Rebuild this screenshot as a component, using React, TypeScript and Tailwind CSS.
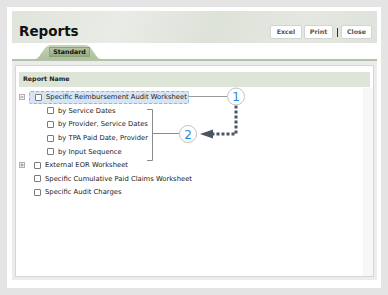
import React from "react";

const font = { fontFamily: '"DejaVu Sans", Verdana, sans-serif' };

function Box() {
  return <span className="inline-block w-[7px] h-[7px] border border-[#7a7a7a] bg-white rounded-[1px] shrink-0" />;
}

function Expander({ plus }: { plus?: boolean }) {
  return (
    <svg width="6" height="6" viewBox="0 0 6 6" className="shrink-0">
      <rect x="0.5" y="0.5" width="5" height="5" fill="#f4f4f4" stroke="#b0b0b0" strokeWidth="1" />
      <line x1="1.5" y1="3" x2="4.5" y2="3" stroke="#8a8a8a" strokeWidth="1" />
      {plus && <line x1="3" y1="1.5" x2="3" y2="4.5" stroke="#8a8a8a" strokeWidth="1" />}
    </svg>
  );
}

function Btn({ children, w }: { children: React.ReactNode; w: string }) {
  return (
    <div className={`h-[14px] ${w} flex items-center justify-center bg-white border border-[#d4d4d4] rounded-[2px] text-[6.3px] font-bold text-[#555]`}>
      {children}
    </div>
  );
}

export default function App() {
  return (
    <div className="relative w-[388px] h-[295px] bg-[#e4e4e4] p-[7px] text-[#222]" style={font}>
      <div className="bg-white h-full pl-[5px] pr-[4px] pt-[4px] pb-[8px] flex flex-col">
        {/* header */}
        <div className="h-[32px] flex items-end justify-between pl-[7px] pr-[5px] pb-[4px] bg-[linear-gradient(110deg,#dfe4dc_0%,#e9ece6_30%,#dde2d9_55%,#e4e8e1_80%,#dde2da_100%)]">
          <div className="text-[13.5px] font-bold leading-none mb-[1px] text-[#111]">Reports</div>
          <div className="flex items-center">
            <Btn w="w-[32px]">Excel</Btn>
            <div className="w-[2px]" />
            <Btn w="w-[29px]">Print</Btn>
            <div className="w-[1px] h-[9px] bg-[#333] ml-[4px] mr-[3px]" />
            <Btn w="w-[31px]">Close</Btn>
          </div>
        </div>
        {/* tabs */}
        <div className="h-[18px] flex items-end border-b-2 border-[#b3c2a6]">
          <div className="relative ml-[23px] w-[66px] h-[14px]">
            <svg className="absolute inset-0" width="66" height="14" viewBox="0 0 66 14">
              <defs>
                <linearGradient id="tg" x1="0" y1="0" x2="0" y2="1">
                  <stop offset="0" stopColor="#c6d4b9" />
                  <stop offset="1" stopColor="#adc09c" />
                </linearGradient>
              </defs>
              <path d="M0 14 C6 14 8 0 16 0 H50 C58 0 60 14 66 14 Z" fill="url(#tg)" />
            </svg>
            <div className="absolute left-[14px] top-[2px] w-[41px] h-[10px] flex items-center justify-center bg-[linear-gradient(#b3c5a2,#93aa80)] border border-[#8ea17c] text-[6.3px] font-bold text-[#111]">
              Standard
            </div>
          </div>
        </div>
        {/* panel */}
        <div className="flex-1 flex flex-col bg-[#ececec] px-[3px] pt-[4px] pb-[3px]">
          <div className="relative flex-1 bg-white border border-[#d6d6d6] px-[3px] pt-[5.5px]">
            <div className="absolute right-0 top-[22px] bottom-0 w-[10px] bg-[#f7f7f7]" />
            <div className="relative h-[15px] bg-[#dde5d6] flex items-center pl-[4px] text-[6.3px] font-bold">
              Report Name
            </div>
            <div className="relative mt-[4px] text-[6.8px] text-[#222] whitespace-nowrap">
              <div className="h-[13.6px] flex items-center">
                <Expander />
                <div className="ml-[4px] h-[13px] w-[160px] flex items-center gap-[4px] pl-[5px] bg-[#d5e5f6] border border-dashed border-[#8fb5e2] rounded-[2px]">
                  <Box />
                  <span>Specific Reimbursement Audit Worksheet</span>
                </div>
              </div>
              {["by Service Dates", "by Provider, Service Dates", "by TPA Paid Date, Provider", "by Input Sequence"].map((t) => (
                <div key={t} className="h-[13.6px] flex items-center gap-[4px] pl-[28px]">
                  <Box />
                  <span>{t}</span>
                </div>
              ))}
              <div className="h-[13.6px] flex items-center">
                <Expander plus />
                <div className="ml-[9px] flex items-center gap-[4px]">
                  <Box />
                  <span>External EOR Worksheet</span>
                </div>
              </div>
              {["Specific Cumulative Paid Claims Worksheet", "Specific Audit Charges"].map((t) => (
                <div key={t} className="h-[13.6px] flex items-center gap-[4px] pl-[15px]">
                  <Box />
                  <span>{t}</span>
                </div>
              ))}
            </div>
          </div>
        </div>
      </div>
      {/* annotations */}
      <svg className="absolute left-0 top-0 pointer-events-none" width="388" height="295" viewBox="0 0 388 295">
        <line x1="189" y1="96.5" x2="227.5" y2="96.5" stroke="#9a9a9a" strokeWidth="1" />
        <path d="M147 109.5 H152.5 V160.5 H147 M152.5 133.5 H179.5" fill="none" stroke="#8a8a8a" strokeWidth="1" />
        <path d="M236 105.5 V134 H213" fill="none" stroke="#4a5563" strokeWidth="3" strokeDasharray="3 2" />
        <polygon points="200,134 213,129.5 213,138.5" fill="#4a5563" />
        <circle cx="236" cy="96.5" r="8.5" fill="#fff" stroke="#c4c4c4" strokeWidth="1" />
        <text x="236" y="101" textAnchor="middle" fontSize="12" fill="#1f8ae6" style={{ fontFamily: '"DejaVu Sans", sans-serif' }}>1</text>
        <circle cx="188" cy="134" r="8.5" fill="#fff" stroke="#c4c4c4" strokeWidth="1" />
        <text x="188" y="138.5" textAnchor="middle" fontSize="12" fill="#1f8ae6" style={{ fontFamily: '"DejaVu Sans", sans-serif' }}>2</text>
      </svg>
    </div>
  );
}
